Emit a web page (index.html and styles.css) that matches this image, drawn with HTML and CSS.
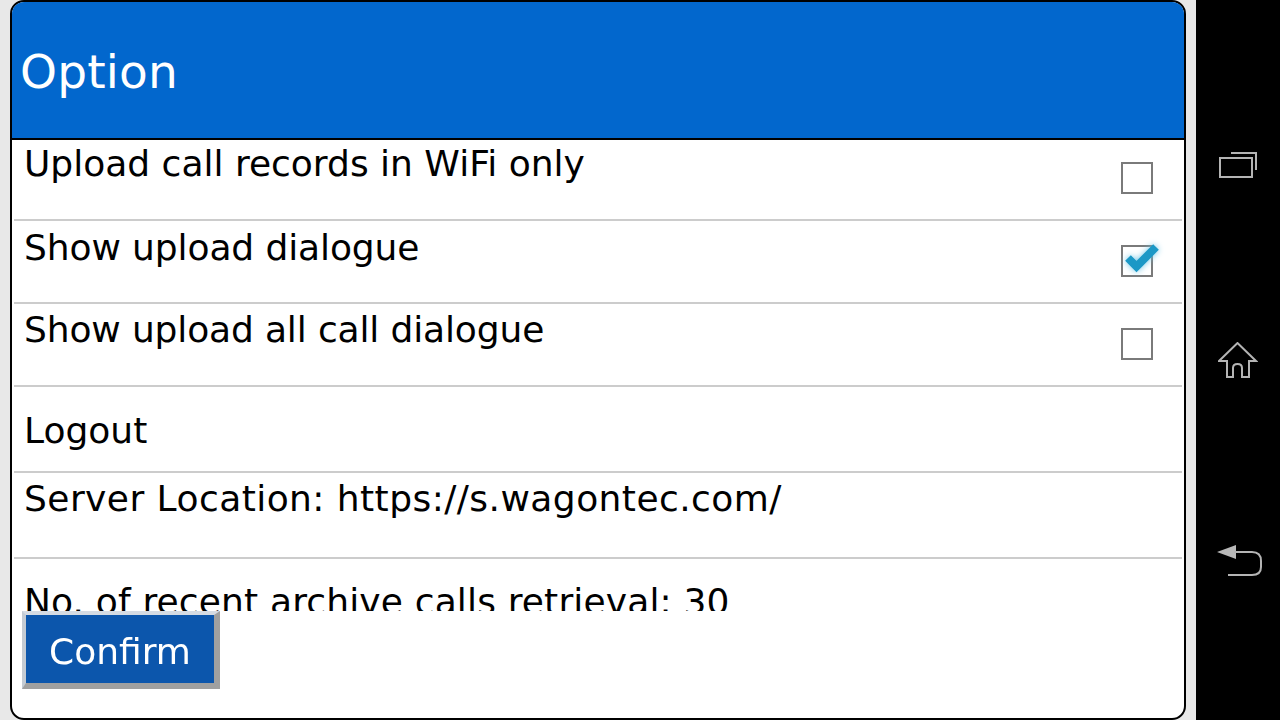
FILE: index.html
```html
<!DOCTYPE html>
<html lang="en">
<head>
  <meta charset="UTF-8" />
  <title>Option</title>
  <link rel="stylesheet" href="styles.css">
</head>
<body>
  <div class="screen">
    <div class="dialog">
      <div class="dialog-title">Option</div>
      <div class="option-list">
        <div class="option-row row-check row-wifi">
          <span>Upload call records in WiFi only</span>
          <span class="checkbox"></span>
        </div>
        <div class="option-row row-check row-dialogue">
          <span>Show upload dialogue</span>
          <span class="checkbox">
            <svg class="tick" width="40" height="40" viewBox="0 0 40 40">
              <path d="M8 21 L16.500 29.500 L36 10" fill="none" stroke="#1b98c6" stroke-width="8"/>
            </svg>
          </span>
        </div>
        <div class="option-row row-check row-all">
          <span>Show upload all call dialogue</span>
          <span class="checkbox"></span>
        </div>
        <div class="option-row row-logout">Logout</div>
        <div class="option-row row-server">Server Location: https://s.wagontec.com/</div>
        <div class="option-row row-recent">No. of recent archive calls retrieval: 30</div>
      </div>
      <div class="dialog-footer">
        <button class="confirm">Confirm</button>
      </div>
    </div>
  </div>
  <div class="navbar">
    <svg width="40" height="28" viewBox="0 0 40 28" fill="none" stroke="#b4b4b4" stroke-width="2">
      <rect x="2" y="7" width="32" height="19"/>
      <path d="M13 2 H38 V19"/>
    </svg>
    <svg width="40" height="38" viewBox="0 0 40 38" fill="none" stroke="#b4b4b4" stroke-width="2">
      <path d="M1 19 L19.500 1 L38 19 H31 V35 H24 V26 Q24 22 19.500 22 Q15 22 15 26 V35 H9 V19 Z"/>
    </svg>
    <svg width="48" height="34" viewBox="0 0 48 34" fill="none">
      <path d="M3 8 L22 1 V15 Z" fill="#b8b8b8"/>
      <path d="M20 8 H38 Q47 8 47 17 V23 Q47 31 38 31 H14" stroke="#b4b4b4" stroke-width="2"/>
    </svg>
  </div>
</body>
</html>
```

FILE: styles.css
```css
html, body {
  margin: 0;
  height: 100%;
}
body {
  display: flex;
  width: 1280px;
  height: 720px;
  overflow: hidden;
  font-family: "DejaVu Sans", sans-serif;
  color: #000;
  background: #000;
}
.screen {
  width: 1196px;
  padding: 0 10px;
  box-sizing: border-box;
  background: #e8e8e8;
}
.dialog {
  display: flex;
  flex-direction: column;
  height: 720px;
  box-sizing: border-box;
  border: 2px solid #000;
  border-radius: 14px;
  background: #fff;
  overflow: hidden;
}
.dialog-title {
  height: 133px;
  flex: none;
  display: flex;
  align-items: center;
  padding: 3px 0 0 8px;
  font-size: 47px;
  line-height: 52px;
  letter-spacing: 0.2px;
  color: #fff;
  background: #0267cd;
  border-bottom: 2px solid #000;
}
.option-list {
  height: 471px;
  flex: none;
  padding: 0 2px;
  overflow: hidden;
  font-size: 36px;
  line-height: 48px;
}
.option-row {
  box-sizing: border-box;
  padding-left: 10px;
  border-bottom: 2px solid #ccc;
}
.row-check {
  display: flex;
  justify-content: space-between;
  height: 83px;
}
.row-wifi {
  height: 81px;
}
.row-dialogue {
  padding-top: 3px;
  letter-spacing: -0.1px;
}
.row-all {
  padding-top: 2px;
  letter-spacing: -0.14px;
}
.row-logout {
  height: 86px;
  padding-top: 20px;
}
.row-server {
  height: 86px;
  padding-top: 2px;
  letter-spacing: 0.44px;
}
.row-recent {
  border-bottom: none;
  padding-top: 19px;
  letter-spacing: 0.15px;
}
.checkbox {
  position: relative;
  width: 32px;
  height: 32px;
  box-sizing: border-box;
  margin: 22px 29px 0 0;
  border: 2px solid #7a7a7a;
}
.row-dialogue .checkbox {
  margin-top: 21px;
}
.tick {
  position: absolute;
  left: -3px;
  top: -10px;
  filter: drop-shadow(0 0 3px #6fc6e6);
}
.dialog-footer {
  flex: 1;
  padding-left: 10px;
}
.confirm {
  display: block;
  width: 198px;
  height: 78px;
  box-sizing: border-box;
  padding: 4px 0 0;
  border-style: solid;
  border-width: 4px 6px 6px 4px;
  border-color: #d5dbe3 #a0a0a0 #a0a0a0 #c4cbd3;
  font-family: inherit;
  font-size: 36px;
  color: #fff;
  background: #0c56ac;
  filter: blur(0.6px);
}
.navbar {
  width: 84px;
  display: flex;
  flex-direction: column;
  align-items: center;
  padding-top: 151px;
  box-sizing: border-box;
}
.navbar svg:nth-child(2) {
  margin-top: 163px;
}
.navbar svg:nth-child(3) {
  margin-top: 164px;
}
```
